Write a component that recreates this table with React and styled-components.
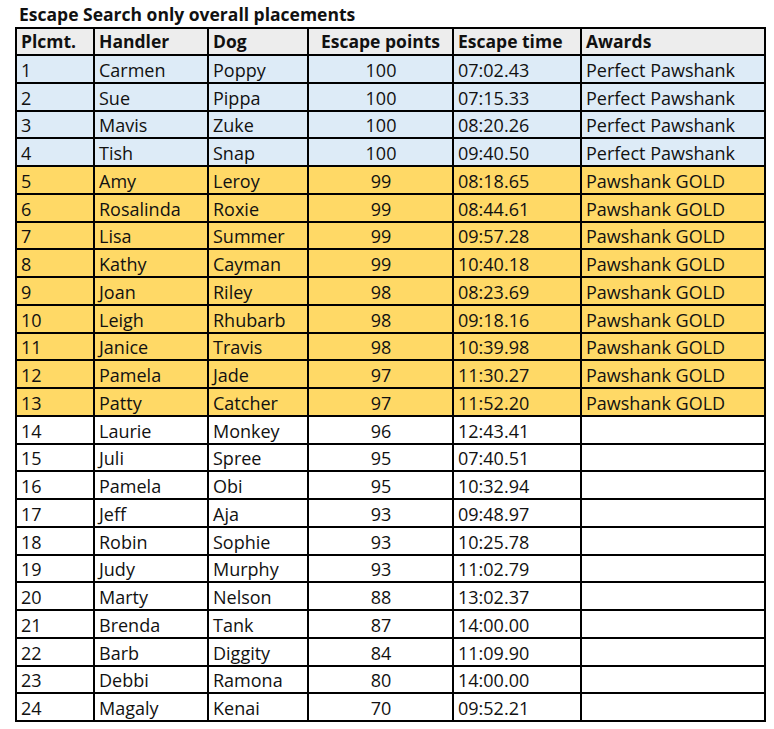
import React from 'react';
import styled, { createGlobalStyle } from 'styled-components';

const GlobalStyle = createGlobalStyle`
    body {
        margin: 0;
        background: #ffffff;
        font-family: "Open Sans", "Liberation Sans", sans-serif;
        color: #111111;
    }
`

const rows = [
    [1, 'Carmen', 'Poppy', 100, '07:02.43', 'Perfect Pawshank'],
    [2, 'Sue', 'Pippa', 100, '07:15.33', 'Perfect Pawshank'],
    [3, 'Mavis', 'Zuke', 100, '08:20.26', 'Perfect Pawshank'],
    [4, 'Tish', 'Snap', 100, '09:40.50', 'Perfect Pawshank'],
    [5, 'Amy', 'Leroy', 99, '08:18.65', 'Pawshank GOLD'],
    [6, 'Rosalinda', 'Roxie', 99, '08:44.61', 'Pawshank GOLD'],
    [7, 'Lisa', 'Summer', 99, '09:57.28', 'Pawshank GOLD'],
    [8, 'Kathy', 'Cayman', 99, '10:40.18', 'Pawshank GOLD'],
    [9, 'Joan', 'Riley', 98, '08:23.69', 'Pawshank GOLD'],
    [10, 'Leigh', 'Rhubarb', 98, '09:18.16', 'Pawshank GOLD'],
    [11, 'Janice', 'Travis', 98, '10:39.98', 'Pawshank GOLD'],
    [12, 'Pamela', 'Jade', 97, '11:30.27', 'Pawshank GOLD'],
    [13, 'Patty', 'Catcher', 97, '11:52.20', 'Pawshank GOLD'],
    [14, 'Laurie', 'Monkey', 96, '12:43.41', ''],
    [15, 'Juli', 'Spree', 95, '07:40.51', ''],
    [16, 'Pamela', 'Obi', 95, '10:32.94', ''],
    [17, 'Jeff', 'Aja', 93, '09:48.97', ''],
    [18, 'Robin', 'Sophie', 93, '10:25.78', ''],
    [19, 'Judy', 'Murphy', 93, '11:02.79', ''],
    [20, 'Marty', 'Nelson', 88, '13:02.37', ''],
    [21, 'Brenda', 'Tank', 87, '14:00.00', ''],
    [22, 'Barb', 'Diggity', 84, '11:09.90', ''],
    [23, 'Debbi', 'Ramona', 80, '14:00.00', ''],
    [24, 'Magaly', 'Kenai', 70, '09:52.21', ''],
]

// column widths measured off the sheet
const widths = [78, 114, 100, 145, 128, 184]

// perfect scores get blue, the gold band gets yellow, the rest stay white
const tierColor = (award) => {
    if (award === 'Perfect Pawshank') return '#ddebf7'
    if (award === 'Pawshank GOLD') return '#ffd966'
    return '#ffffff'
}

function App() {
    return (
        <Page>
            <GlobalStyle />
            <Title>Escape Search only overall placements</Title>
            <Table>
                <colgroup>
                    {widths.map((w, i) => <col key={i} style={{ width: w }} />)}
                </colgroup>
                <thead>
                    <HeadRow>
                        <HeadCell>Plcmt.</HeadCell>
                        <HeadCell>Handler</HeadCell>
                        <HeadCell>Dog</HeadCell>
                        <HeadCell $center>Escape points</HeadCell>
                        <HeadCell>Escape time</HeadCell>
                        <HeadCell>Awards</HeadCell>
                    </HeadRow>
                </thead>
                <tbody>
                    {rows.map(([place, handler, dog, points, time, award]) => (
                        <Row key={place} $bg={tierColor(award)}>
                            <Cell>{place}</Cell>
                            <Cell>{handler}</Cell>
                            <Cell>{dog}</Cell>
                            <Cell $center>{points}</Cell>
                            <Cell>{time}</Cell>
                            <Cell>{award}</Cell>
                        </Row>
                    ))}
                </tbody>
            </Table>
        </Page>
    )
}

export default App

const Page = styled.div`
    padding-left: 15px;
    width: 749px;
`
const Title = styled.div`
    height: 27px;
    padding-left: 4px;
    font-size: 17.5px;
    font-weight: 700;
    line-height: 28px;
    white-space: nowrap;
`
const Table = styled.table`
    border-collapse: collapse;
    table-layout: fixed;
    width: 749px;
`
const HeadRow = styled.tr`
    height: 27px;
    background: #ededed;
`
const HeadCell = styled.th`
    border: 2px solid #000;
    padding: 0 4px 2px 4px;
    text-align: ${props => props.$center ? 'center' : 'left'};
    vertical-align: bottom;
    font-size: 17.5px;
    font-weight: 700;
    line-height: 22px;
    white-space: nowrap;
    overflow: hidden;
`
const Row = styled.tr`
    height: 27.75px;
    background: ${props => props.$bg};
`
const Cell = styled.td`
    border: 2px solid #000;
    padding: 0 3px 1px 4px;
    text-align: ${props => props.$center ? 'center' : 'left'};
    vertical-align: bottom;
    font-size: 18px;
    line-height: 22px;
    white-space: nowrap;
    overflow: hidden;
`
